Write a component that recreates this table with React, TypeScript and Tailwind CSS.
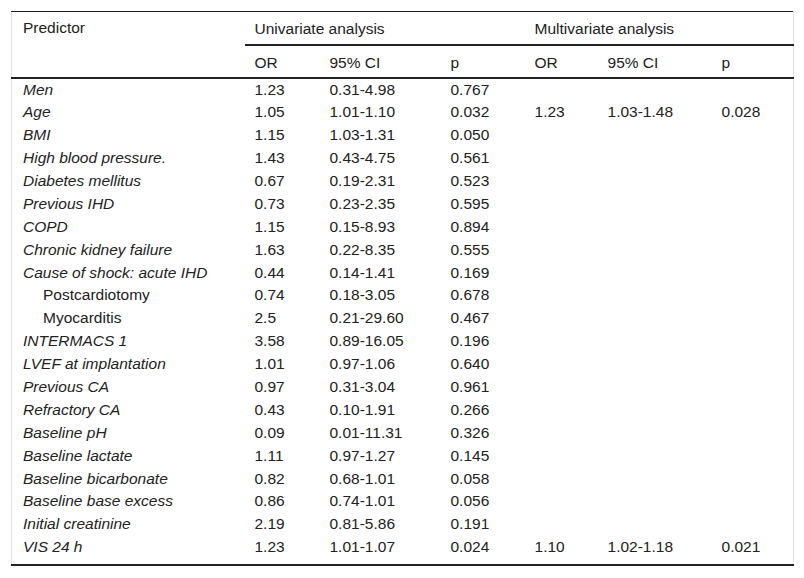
import React from 'react'

type Row = {
  label: string
  indent?: boolean
  uni: [string, string, string]
  multi?: [string, string, string]
}

const rows: Row[] = [
  { label: 'Men', uni: ['1.23', '0.31-4.98', '0.767'] },
  { label: 'Age', uni: ['1.05', '1.01-1.10', '0.032'], multi: ['1.23', '1.03-1.48', '0.028'] },
  { label: 'BMI', uni: ['1.15', '1.03-1.31', '0.050'] },
  { label: 'High blood pressure.', uni: ['1.43', '0.43-4.75', '0.561'] },
  { label: 'Diabetes mellitus', uni: ['0.67', '0.19-2.31', '0.523'] },
  { label: 'Previous IHD', uni: ['0.73', '0.23-2.35', '0.595'] },
  { label: 'COPD', uni: ['1.15', '0.15-8.93', '0.894'] },
  { label: 'Chronic kidney failure', uni: ['1.63', '0.22-8.35', '0.555'] },
  { label: 'Cause of shock: acute IHD', uni: ['0.44', '0.14-1.41', '0.169'] },
  { label: 'Postcardiotomy', indent: true, uni: ['0.74', '0.18-3.05', '0.678'] },
  { label: 'Myocarditis', indent: true, uni: ['2.5', '0.21-29.60', '0.467'] },
  { label: 'INTERMACS 1', uni: ['3.58', '0.89-16.05', '0.196'] },
  { label: 'LVEF at implantation', uni: ['1.01', '0.97-1.06', '0.640'] },
  { label: 'Previous CA', uni: ['0.97', '0.31-3.04', '0.961'] },
  { label: 'Refractory CA', uni: ['0.43', '0.10-1.91', '0.266'] },
  { label: 'Baseline pH', uni: ['0.09', '0.01-11.31', '0.326'] },
  { label: 'Baseline lactate', uni: ['1.11', '0.97-1.27', '0.145'] },
  { label: 'Baseline bicarbonate', uni: ['0.82', '0.68-1.01', '0.058'] },
  { label: 'Baseline base excess', uni: ['0.86', '0.74-1.01', '0.056'] },
  { label: 'Initial creatinine', uni: ['2.19', '0.81-5.86', '0.191'] },
  { label: 'VIS 24 h', uni: ['1.23', '1.01-1.07', '0.024'], multi: ['1.10', '1.02-1.18', '0.021'] },
]

export default function App() {
  return (
    <div className="w-[804px] h-[578px] bg-white pt-[11px] pl-[11px] font-['Liberation_Sans',Arial,sans-serif] text-[15.5px] leading-[19px] text-[#222]">
      <table className="w-[782px] table-fixed border-collapse border-x border-x-[#e3e3e3] border-t border-t-[#222] border-b-2 border-b-[#222]">
        <colgroup>
          <col className="w-[233px]" />
          <col className="w-[75px]" />
          <col className="w-[121px]" />
          <col className="w-[84px]" />
          <col className="w-[73px]" />
          <col className="w-[114px]" />
          <col className="w-[82px]" />
        </colgroup>
        <thead>
          <tr className="h-[33px]">
            <th rowSpan={2} className="pl-[11px] text-left font-normal align-top pt-[6px] border-b-2 border-b-[#222]">
              Predictor
            </th>
            <th colSpan={3} className="pl-[10px] pt-[1px] text-left font-normal border-b-2 border-b-[#222]">
              Univariate analysis
            </th>
            <th colSpan={3} className="pl-[10px] pt-[1px] text-left font-normal border-b-2 border-b-[#222]">
              Multivariate analysis
            </th>
          </tr>
          <tr className="h-[33px]">
            {['OR', '95% CI', 'p', 'OR', '95% CI', 'p'].map((h, i) => (
              <th key={i} className="pl-[10px] pt-[2px] text-left font-normal border-b-2 border-b-[#222]">
                {h}
              </th>
            ))}
          </tr>
        </thead>
        <tbody>
          {rows.map((r, i) => (
            <tr key={i} className="h-[22.9px]">
              <td className={r.indent ? 'pl-[31px]' : 'pl-[11px] italic'}>{r.label}</td>
              {r.uni.map((v, j) => (
                <td key={j} className="pl-[10px]">{v}</td>
              ))}
              {[0, 1, 2].map((j) => (
                <td key={'m' + j} className="pl-[10px]">{r.multi ? r.multi[j] : ''}</td>
              ))}
            </tr>
          ))}
          <tr className="h-[7px]">
            <td colSpan={7} />
          </tr>
        </tbody>
      </table>
    </div>
  )
}
